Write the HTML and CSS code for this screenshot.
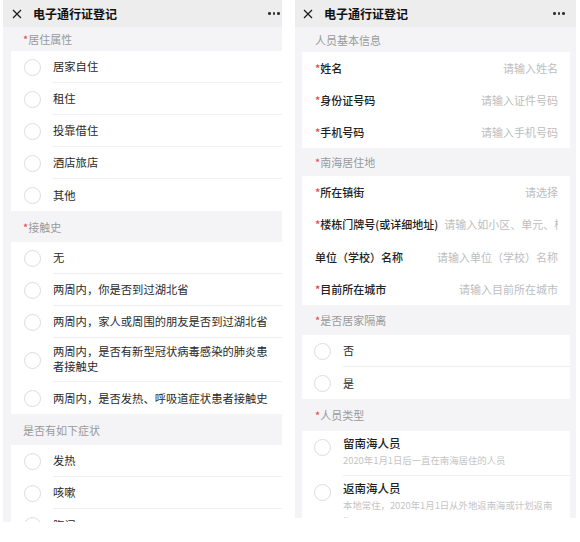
FILE: index.html
```html
<!DOCTYPE html>
<html lang="zh-CN">
<head>
<meta charset="utf-8">
<title>电子通行证登记</title>
<link rel="stylesheet" href="styles.css">
</head>
<body>
<div class="screens">
  <div class="phone phone-left">
    <div class="topbar">
      <svg class="close" viewBox="0 0 10 10" width="10" height="10"><path d="M1 1L9 9M9 1L1 9" stroke="#1a1a1a" stroke-width="1.2" fill="none"/></svg>
      <span class="title">电子通行证登记</span>
      <span class="more"><i></i><i></i><i></i></span>
    </div>
    <div class="content">
      <div class="sec sec-first"><span class="req">*</span>居住属性</div>
      <div class="card">
        <div class="opt"><span class="radio"></span><div class="opt-body"><span>居家自住</span></div></div>
        <div class="opt"><span class="radio"></span><div class="opt-body"><span>租住</span></div></div>
        <div class="opt"><span class="radio"></span><div class="opt-body"><span>投靠借住</span></div></div>
        <div class="opt"><span class="radio"></span><div class="opt-body"><span>酒店旅店</span></div></div>
        <div class="opt"><span class="radio"></span><div class="opt-body"><span>其他</span></div></div>
      </div>
      <div class="sec"><span class="req">*</span>接触史</div>
      <div class="card">
        <div class="opt"><span class="radio"></span><div class="opt-body"><span>无</span></div></div>
        <div class="opt"><span class="radio"></span><div class="opt-body"><span>两周内，你是否到过湖北省</span></div></div>
        <div class="opt"><span class="radio"></span><div class="opt-body"><span>两周内，家人或周围的朋友是否到过湖北省</span></div></div>
        <div class="opt"><span class="radio"></span><div class="opt-body opt-multi"><span>两周内，是否有新型冠状病毒感染的肺炎患<br>者接触史</span></div></div>
        <div class="opt"><span class="radio"></span><div class="opt-body"><span>两周内，是否发热、呼吸道症状患者接触史</span></div></div>
      </div>
      <div class="sec">是否有如下症状</div>
      <div class="card">
        <div class="opt"><span class="radio"></span><div class="opt-body"><span>发热</span></div></div>
        <div class="opt"><span class="radio"></span><div class="opt-body"><span>咳嗽</span></div></div>
        <div class="opt"><span class="radio"></span><div class="opt-body"><span>胸闷</span></div></div>
      </div>
    </div>
  </div>

  <div class="phone phone-right">
    <div class="topbar">
      <svg class="close" viewBox="0 0 10 10" width="10" height="10"><path d="M1 1L9 9M9 1L1 9" stroke="#1a1a1a" stroke-width="1.2" fill="none"/></svg>
      <span class="title">电子通行证登记</span>
      <span class="more"><i></i><i></i><i></i></span>
    </div>
    <div class="content">
      <div class="sec sec-first">人员基本信息</div>
      <div class="card">
        <div class="field"><span class="field-label"><span class="req">*</span>姓名</span><span class="field-val">请输入姓名</span></div>
        <div class="field"><span class="field-label"><span class="req">*</span>身份证号码</span><span class="field-val">请输入证件号码</span></div>
        <div class="field"><span class="field-label"><span class="req">*</span>手机号码</span><span class="field-val">请输入手机号码</span></div>
      </div>
      <div class="sec sec-mid"><span class="req">*</span>南海居住地</div>
      <div class="card">
        <div class="field"><span class="field-label"><span class="req">*</span>所在镇街</span><span class="field-val">请选择</span></div>
        <div class="field"><span class="field-label"><span class="req">*</span>楼栋门牌号(或详细地址)</span><span class="field-val field-long">请输入如小区、单元、楼栋、门牌号</span></div>
        <div class="field"><span class="field-label">单位（学校）名称</span><span class="field-val">请输入单位（学校）名称</span></div>
        <div class="field"><span class="field-label"><span class="req">*</span>目前所在城市</span><span class="field-val">请输入目前所在城市</span></div>
      </div>
      <div class="sec"><span class="req">*</span>是否居家隔离</div>
      <div class="card">
        <div class="opt"><span class="radio"></span><div class="opt-body"><span>否</span></div></div>
        <div class="opt"><span class="radio"></span><div class="opt-body"><span>是</span></div></div>
      </div>
      <div class="sec sec-tall"><span class="req">*</span>人员类型</div>
      <div class="card">
        <div class="opt opt-desc"><span class="radio"></span><div class="opt-body"><div class="desc-title">留南海人员</div><div class="desc-sub">2020年1月1日后一直在南海居住的人员</div></div></div>
        <div class="opt opt-desc"><span class="radio"></span><div class="opt-body"><div class="desc-title">返南海人员</div><div class="desc-sub">本地常住，2020年1月1日从外地返南海或计划返南<br>海</div></div></div>
      </div>
    </div>
  </div>
</div>
</body>
</html>
```

FILE: styles.css
```css
html, body {
  margin: 0;
  padding: 0;
  background: #ffffff;
}

body {
  font-family: "Noto Sans CJK SC", "Noto Sans", sans-serif;
  color: #2a2a2a;
}

.screens {
  display: flex;
  align-items: flex-start;
  width: 580px;
  height: 542px;
  overflow: hidden;
}

.phone {
  background: #f4f4f7;
  overflow: hidden;
  display: flex;
  flex-direction: column;
}

.phone-left {
  margin-left: 3px;
  width: 279px;
  height: 522px;
}

.phone-right {
  margin-left: 13px;
  width: 281px;
  height: 518px;
}

.topbar {
  flex: 0 0 27px;
  height: 27px;
  background: #ededed;
  display: flex;
  align-items: center;
  padding-left: 9px;
  padding-right: 2px;
  box-sizing: border-box;
}

.phone-right .topbar {
  padding-left: 8px;
  padding-right: 11px;
}

.close {
  display: block;
  flex: 0 0 auto;
}

.title {
  margin-left: 11px;
  font-size: 12px;
  font-weight: 700;
  color: #111;
  line-height: 16px;
  flex: 1;
}

.more {
  display: flex;
  gap: 2px;
  align-items: center;
}

.more i {
  display: block;
  width: 2.6px;
  height: 2.6px;
  border-radius: 50%;
  background: #333;
}

.content {
  flex: 1;
  padding-left: 8px;
}

.phone-right .content {
  padding-left: 7px;
  padding-right: 6px;
}

.sec {
  height: 31px;
  display: flex;
  align-items: center;
  padding-left: 12px;
  font-size: 11px;
  color: #9a9a9a;
}

.sec-first {
  height: 24px;
}

.phone-right .sec {
  padding-left: 13px;
  height: 30px;
}

.phone-right .sec-first {
  height: 25px;
}

.phone-right .sec-mid {
  height: 28px;
}

.phone-right .sec-tall {
  height: 32px;
}

.req {
  color: #e5403a;
}

.card {
  background: #ffffff;
}

.opt {
  display: flex;
  align-items: center;
  padding-left: 12.5px;
}

.phone-right .opt {
  padding-left: 11.5px;
}

.radio {
  flex: 0 0 auto;
  width: 15px;
  height: 15px;
  border: 1px solid #dcdcdc;
  border-radius: 50%;
  margin-right: 12.5px;
}

.opt-body {
  flex: 1;
  align-self: stretch;
  min-height: 32px;
  box-sizing: border-box;
  display: flex;
  align-items: center;
  border-bottom: 1px solid #efefef;
  font-size: 11.3px;
  line-height: 15px;
  color: #2a2a2a;
  white-space: nowrap;
}

.phone-right .opt-body {
  font-size: 11px;
}

.opt:last-child .opt-body {
  border-bottom: 0;
}

.opt-multi {
  min-height: 43px;
  padding: 6px 0 7px;
}

.opt-desc {
  align-items: flex-start;
}

.opt-desc .radio {
  margin-top: 7.5px;
}

.opt-desc .opt-body {
  flex-direction: column;
  align-items: flex-start;
  justify-content: flex-start;
  padding: 4px 12px 7px 0;
  min-height: 44px;
}

.desc-title {
  font-size: 11.5px;
  line-height: 16px;
  font-weight: 500;
  color: #1f1f1f;
}

.desc-sub {
  margin-top: 1px;
  font-size: 9.4px;
  line-height: 16px;
  color: #c4c4c4;
}

.field {
  display: flex;
  align-items: center;
  height: 32px;
  padding: 0 12px 0 13px;
  font-size: 11px;
  white-space: nowrap;
}

.phone-right .card:nth-of-type(4) .field {
  height: 32.25px;
}

.field-label {
  flex: 0 0 auto;
  font-weight: 500;
  color: #222;
}

.field-val {
  flex: 1;
  min-width: 0;
  margin-left: 6px;
  overflow: hidden;
  text-align: right;
  color: #bdbdbd;
}

.field-long {
  text-align: left;
}
```
